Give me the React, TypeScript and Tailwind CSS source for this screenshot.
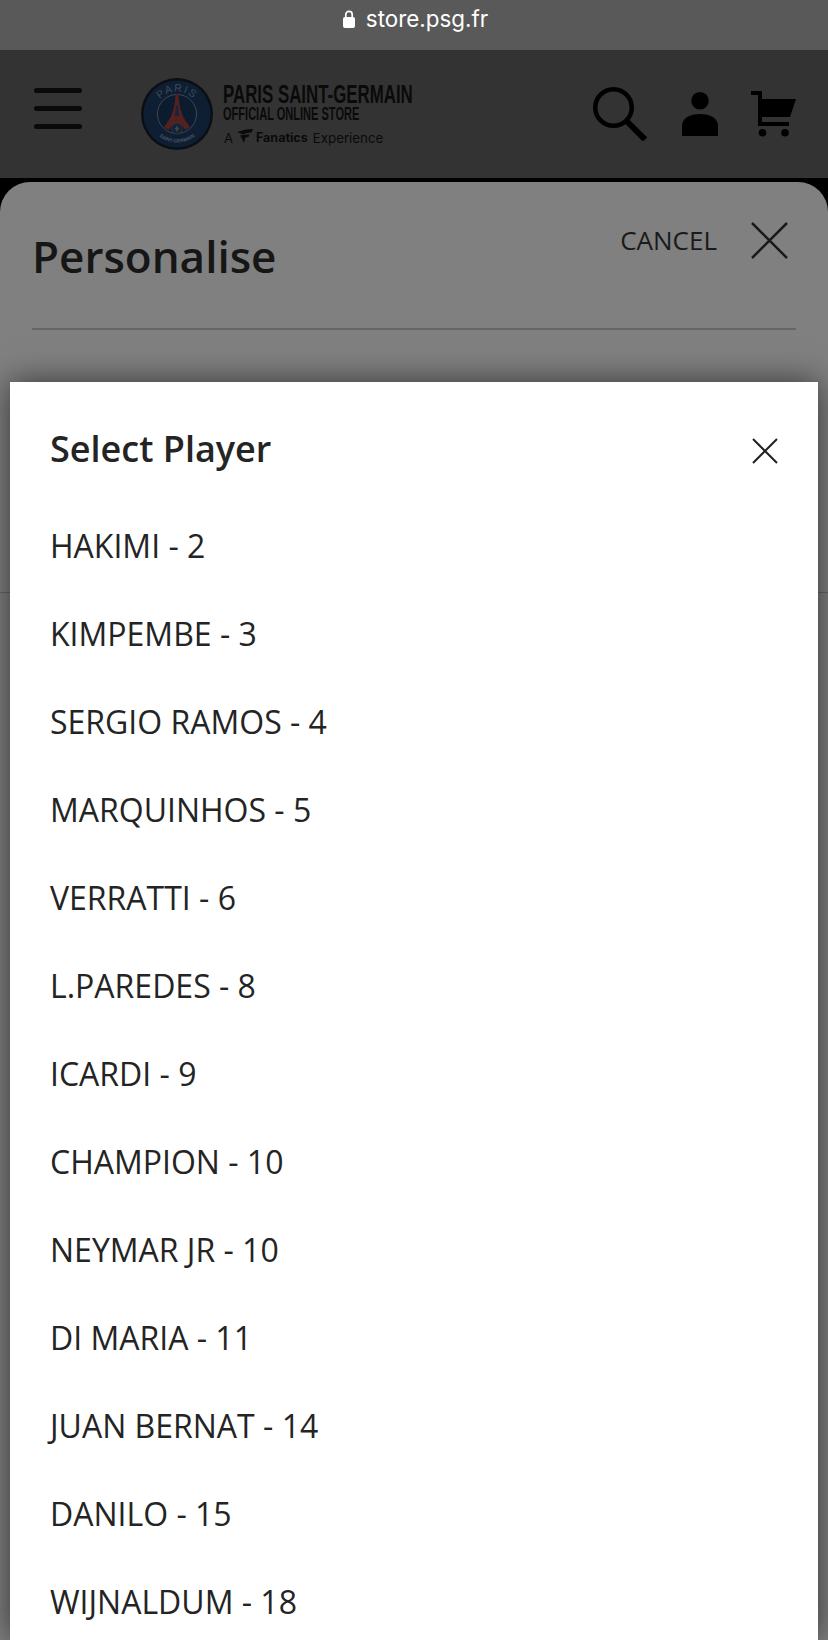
const players = ["HAKIMI - 2","KIMPEMBE - 3","SERGIO RAMOS - 4","MARQUINHOS - 5","VERRATTI - 6","L.PAREDES - 8","ICARDI - 9","CHAMPION - 10","NEYMAR JR - 10","DI MARIA - 11","JUAN BERNAT - 14","DANILO - 15","WIJNALDUM - 18"];

function Crest() {
  return (
    <svg width="72" height="72" viewBox="0 0 72 72">
      <defs>
        <path id="crest-top" d="M13.500 36 A22.500 22.500 0 0 1 58.500 36" fill="none" />
        <path id="crest-bottom" d="M7.500 36 A28.500 28.500 0 0 0 64.500 36" fill="none" />
      </defs>
      <circle cx="36" cy="36" r="36" fill="#0a0f15" />
      <circle cx="36" cy="36" r="33.500" fill="#0f1f33" />
      <circle cx="36" cy="36" r="19.500" fill="#0d1b2e" stroke="#3e4652" strokeWidth="1" />
      <path d="M34.800 16 h2.400 l1.200 10 q1.500 12 10.600 23 q-2.500 2-5 3 q-2-6-8-6 t-8 6 q-2.500-1-5-3 q9.100-11 10.600-23z" fill="#54211f" />
      <path d="M35.300 27 h1.400 l1.400 11 h-4.200z" fill="#16233a" />
      <circle cx="36" cy="50.500" r="5.500" fill="#13233f" stroke="#3e3436" strokeWidth="0.800" />
      <path d="M36 47.500 l1.200 2.500 l1.300 0.500 l-1.700 1.200 l-0.300 1.800 h-1 l-0.300-1.800 l-1.700-1.200 l1.300-0.500z" fill="#4f472e" />
      <text fontSize="10.500" fill="#3c4859" fontFamily="'Liberation Sans', sans-serif" letterSpacing="1.500" textAnchor="middle">
        <textPath href="#crest-top" startOffset="50%">PARIS</textPath>
      </text>
      <text fontSize="4.800" fontWeight="700" fill="#4d5563" fontFamily="'Liberation Sans', sans-serif" textAnchor="middle">
        <textPath href="#crest-bottom" startOffset="50%">SAINT-GERMAIN</textPath>
      </text>
    </svg>
  );
}

export default function App() {
  return (
    <div className="relative h-[1640px] w-[828px] overflow-hidden bg-black font-['Open_Sans',sans-serif] text-[#242424]">
      <div className="flex h-[50px] items-center justify-center gap-[11px] bg-[#595959] pb-[12px] pl-[3px] font-['Inter',sans-serif] text-[22.4px] text-white">
        <svg width="12" height="18" viewBox="0 0 12 18" fill="white"><rect x="0" y="7" width="12" height="11" rx="2" /><path d="M2.800 8V4.500a3.200 3.200 0 0 1 6.400 0V8" fill="none" stroke="white" strokeWidth="1.700" /></svg>
        <span>store.psg.fr</span>
      </div>

      <div className="flex h-[128px] items-center bg-[#333333] pr-[32px]">
        <div className="mb-[11px] ml-[34px] flex w-[48px] flex-col gap-[13px]">
          <div className="h-[5px] rounded-full bg-[#0a0a0a]" />
          <div className="h-[5px] rounded-full bg-[#0a0a0a]" />
          <div className="h-[5px] rounded-full bg-[#0a0a0a]" />
        </div>
        <div className="ml-[59px]"><Crest /></div>
        <div className="mt-[-1px] ml-[10px] flex w-[200px] flex-col text-[#0a0a0a]">
          <div className="origin-left scale-x-[0.636] whitespace-nowrap font-['Liberation_Sans',sans-serif] text-[26.5px] leading-[24px] font-bold">PARIS SAINT-GERMAIN</div>
          <div className="origin-left scale-x-[0.613] whitespace-nowrap font-['Liberation_Sans',sans-serif] text-[18px] leading-[17px] font-bold">OFFICIAL ONLINE STORE</div>
          <div className="mt-[8px] flex items-center whitespace-nowrap font-['Inter',sans-serif] text-[13px] leading-[14px]">
            <span className="ml-[1px]">A</span>
            <svg className="mt-[-4px] mr-[3px] ml-[4px]" width="16" height="15" viewBox="0 0 16 15" fill="#0a0a0a"><path d="M0 3 Q5 2 7 1 Q12 0 16 0 L14.500 3.500 Q9 3.500 6 5.500z M3 6.500 Q8 5.500 12.500 5.500 L11.500 8 L8.500 8.500 L7 14 Q5 9.500 3 6.500z" /></svg>
            <span className="text-[12.5px] font-bold">Fanatics</span>
            <span className="ml-[5px] text-[13.3px]">Experience</span>
          </div>
        </div>
        <div className="ml-auto flex items-center">
          <svg width="54" height="54" viewBox="0 0 54 54" fill="none" stroke="#000" strokeWidth="4.500"><circle cx="20.500" cy="20.500" r="18.250" /><path d="M33 33.500 L52 52.500" strokeWidth="6" /></svg>
          <svg className="ml-[35px]" width="36" height="44" viewBox="0 0 36 44" fill="#000"><circle cx="18" cy="8.800" r="8.800" /><path d="M0 44V34C0 26 8 22 18 22s18 4 18 12v10z" /></svg>
          <svg className="ml-[33px]" width="45" height="46" viewBox="0 0 45 46" fill="#000"><path d="M0 0H11V4H0z" /><path d="M7 0H11V35H7z" /><path d="M11 8H45L39 26H11z" /><path d="M7 31H38V35H7z" /><circle cx="11.500" cy="41.800" r="3.800" /><circle cx="34" cy="41.800" r="3.800" /></svg>
        </div>
      </div>

      <div className="mt-[4px] h-[1458px] rounded-t-[30px] bg-[#808080]">
        <div className="mx-[32px] flex h-[148px] justify-between border-b-2 border-[#666666] pt-[45px]">
          <h1 className="text-[44px] leading-[58px] font-semibold text-[#161616]">Personalise</h1>
          <div className="flex h-[40px] items-start">
            <span className="mt-[-5px] text-[26px] leading-[36px] text-[#1a1a1a]">CANCEL</span>
            <svg className="mt-[-5px] mr-[8px] ml-[34px]" width="37" height="37" viewBox="0 0 37 37" stroke="#1a1a1a" strokeWidth="2.500"><path d="M1 1 L36 36 M36 1 L1 36" /></svg>
          </div>
        </div>
        <div className="mt-[262px] h-px bg-[#666666]" />
      </div>

      <div className="absolute top-[382px] right-[10px] left-[10px] h-[1258px] bg-white px-[40px] shadow-[0_0_30px_rgba(0,0,0,0.6)]">
        <div className="flex h-[120px] items-center justify-between pt-[14px]">
          <h2 className="text-[36px] leading-[46px] font-semibold">Select Player</h2>
          <svg className="mt-[4px]" width="26" height="26" viewBox="0 0 26 26" stroke="#212121" strokeWidth="2"><path d="M1 1 L25 25 M25 1 L1 25" /></svg>
        </div>
        <ul>
          {players.map((p) => (
            <li key={p} className="flex h-[88px] items-center text-[32px] leading-[40px]">{p}</li>
          ))}
        </ul>
      </div>
    </div>
  );
}
